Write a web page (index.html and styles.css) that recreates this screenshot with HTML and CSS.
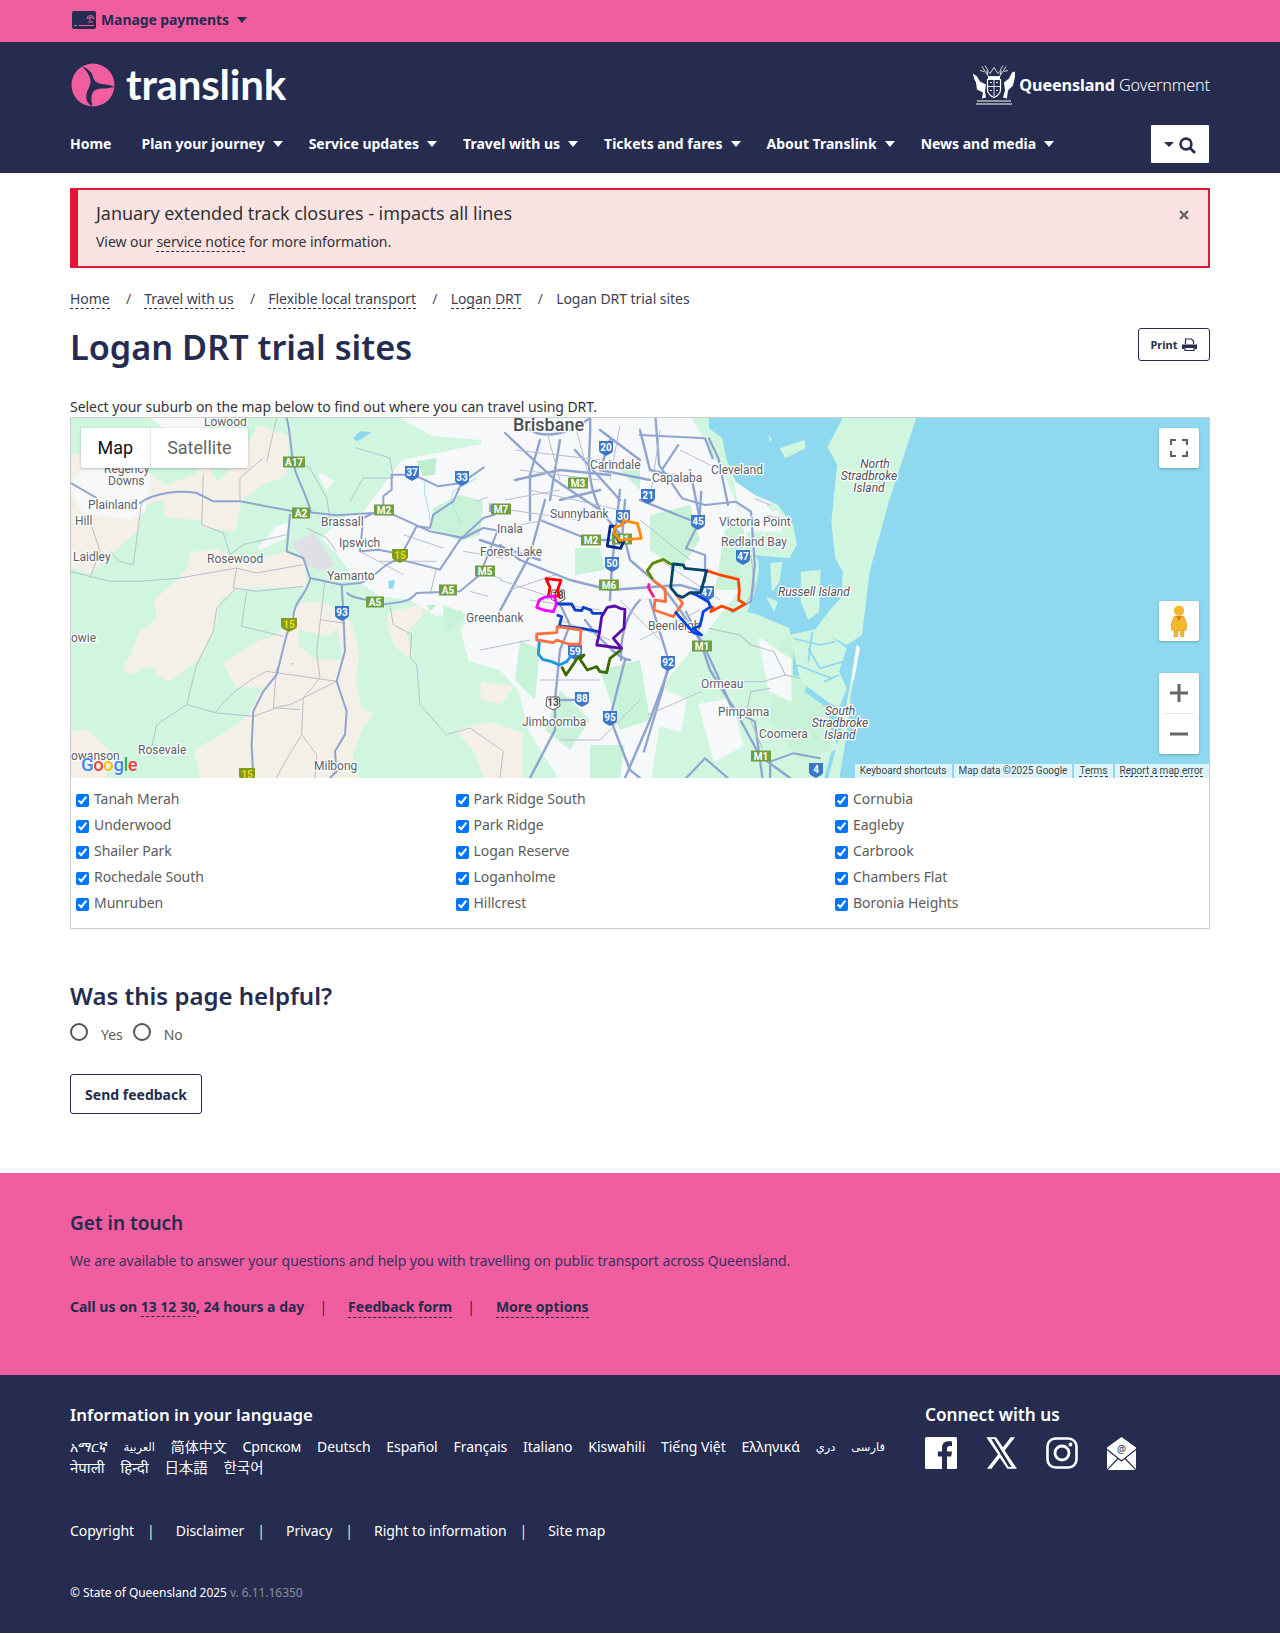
FILE: index.html
```html
<!DOCTYPE html>
<html lang="en">
<head>
<meta charset="utf-8">
<title>Logan DRT trial sites</title>
<link rel="stylesheet" href="styles.css">
</head>
<body>
<div class="topbar">
  <div class="wrap topbar-in">
    <svg class="pay-icon" viewBox="0 0 24 18"><rect width="24" height="18" rx="2" fill="#252c4f"/><path d="M15 8a3.500 3.500 0 0 1 7 0M16.500 8a2 2 0 0 1 4 0M18 10V6M16 11h5" fill="none" stroke="#f15e9f" stroke-width="1"/><path d="M2 14.500h3M7 14.500h15" stroke="#f15e9f" stroke-width="1"/></svg>
    <span class="pay-text">Manage payments</span><span class="caret caret-navy"></span>
  </div>
</div>
<header class="head">
  <div class="wrap">
    <div class="brand-row">
      <div class="logo">
        <svg class="logo-mark" viewBox="0 0 44 44"><circle cx="22" cy="22" r="21.500" fill="#f15e9f"/><path d="M11 3.500C17 5.500 21 9 22 14 22.800 18 26 20.500 31 21 36 21.500 40 22 43.500 24 40 24.800 36 25.500 32 25.600 27 25.800 23 27 21.500 30 20 33.500 20 38 21.500 43.500 16 40.500 14.500 36 15.500 31 16.500 26.500 19 23.500 19.500 19.500 20 14 16 8 11 3.500Z" fill="#252c4f"/></svg>
        <span class="logo-text">translink</span>
      </div>
      <div class="qld">
        <svg class="crest" viewBox="0 0 44 41" fill="none" stroke="#fff"><path d="M15 6l3 3 4-6 4 6 3-3-1 6H16zM10 2l5 8M13 1l3 5M34 2l-5 8M31 1l-3 5M8 6l4 1M36 6l-4 1" stroke-width=".8"/><path d="M16 12h12v2.500H16z" fill="#fff" stroke="none"/><path d="M15.500 15h13v10c0 4-3 6.500-6.500 8-3.500-1.500-6.500-4-6.500-8z" stroke-width="1.200"/><path d="M22 15v17M16 22h12M18 18h2M24 18h2M18 26h2M24 26h2" stroke-width=".9"/><path d="M1 9l4 3 3 5 6 3-1 7 1 6-4 1 1-6-6-3-1-7-2-4z" fill="#fff" stroke="none"/><path d="M43 7l-3 1-3 6-5 4 1 8-2 7 4 1 1-8 5-5 2-9z" fill="#fff" stroke="none"/><path d="M5 36.500h34M4 39.500h36" stroke-width="1"/></svg>
        <span class="qld-text"><b>Queensland</b> Government</span>
      </div>
    </div>
    <nav class="nav">
      <a class="nav-home">Home</a>
      <a class="nav-item">Plan your journey<span class="caret"></span></a>
      <a class="nav-item">Service updates<span class="caret"></span></a>
      <a class="nav-item">Travel with us<span class="caret"></span></a>
      <a class="nav-item">Tickets and fares<span class="caret"></span></a>
      <a class="nav-item">About Translink<span class="caret"></span></a>
      <a class="nav-item">News and media<span class="caret"></span></a>
      <button class="search" aria-label="Search"><span class="caret caret-navy"></span><svg class="search-icon" viewBox="0 0 17 17" fill="none" stroke="#252c4f" stroke-width="2.600"><circle cx="7" cy="7" r="5.400"/><path d="M11 11l5 5"/></svg></button>
    </nav>
  </div>
</header>

<main class="wrap">
  <section class="alert">
    <div>
      <p class="alert-title">January extended track closures - impacts all lines</p>
      <p class="alert-sub">View our <a class="dash">service notice</a> for more information.</p>
    </div>
    <svg class="alert-x" viewBox="0 0 10 10" stroke="#5d5f68" stroke-width="2.200"><path d="M1 1l8 8M9 1l-8 8"/></svg>
  </section>
  <ol class="crumbs">
    <li><a class="dash">Home</a></li><li class="sl">/</li>
    <li><a class="dash">Travel with us</a></li><li class="sl">/</li>
    <li><a class="dash">Flexible local transport</a></li><li class="sl">/</li>
    <li><a class="dash">Logan DRT</a></li><li class="sl">/</li>
    <li>Logan DRT trial sites</li>
  </ol>
  <div class="title-row">
    <h1>Logan DRT trial sites</h1>
    <button class="print">Print<svg class="print-icon" viewBox="0 0 15 13"><path d="M3.500 6V1h6l2 2v3" fill="none" stroke="#252c4f" stroke-width="1.200"/><path d="M0 6.500h15V11h-2.500V9h-10v2H0z" fill="#252c4f"/><path d="M3 9.500h9V12.500H3z" fill="none" stroke="#252c4f" stroke-width="1.200"/></svg></button>
  </div>
  <p class="intro">Select your suburb on the map below to find out where you can travel using DRT.</p>

  <div class="mapbox">
    <div class="map">
      <svg class="mapsvg" viewBox="71 418 1138 360" preserveAspectRatio="none">
        <rect x="71" y="418" width="1138" height="360" fill="#d0f6e0"/>
        <g transform="matrix(.3333 0 0 .3333 70 418)">
          <g class="soft-beige">
            <path d="M0 120L60 110 100 170 230 170 290 210 390 170 400 140 440 200 400 230 400 300 290 290 290 230 210 260 200 330 100 420 60 460 0 440Z"/>
            <path d="M570 30L650 60 640 170 580 190 510 240 490 330 400 320 410 230 460 190 510 130Z"/>
            <path d="M365 410L440 400 520 440 650 410 700 430 700 500 560 500 500 510 440 540 430 620 380 720 300 780 250 760 225 790 170 750 220 640 270 610 260 550 340 480 365 440Z"/>
            <path d="M700 560L760 560 840 620 860 700 850 790 870 880 900 890 870 930 840 1010 860 1080 400 1080 380 1000 470 950 540 900 590 800 500 800 470 740 560 680 620 660 640 640 670 600Z"/>
            <path d="M0 950L50 940 110 1000 100 1080 0 1080Z"/>
            <path d="M960 590L1050 570 1050 590 1000 640 1020 710 980 680 960 620Z"/>
            <path d="M1170 940L1260 920 1350 950 1350 1080 1250 1080 1220 1000Z"/>
            <path d="M1240 800L1320 810 1290 850 1240 840Z"/>
            <path d="M240 630L300 640 270 720 200 740Z"/>
            <path d="M0 290L100 290 60 400 0 420Z"/>
          </g>
          <path class="soft-green" d="M690 640L770 660 800 640 810 720 740 720 690 680Z M210 760L250 750 260 830 200 860 120 830Z"/>
          <g class="soft-white">
            <path d="M880 290L1000 130 1350 60 1350 690 1200 650 1180 570 1100 590 1020 540 930 530 860 480 800 400 760 360 830 300Z"/>
            <path d="M1000 0H1350V70L1090 50Z"/>
            <path d="M50 150L240 170 220 280 180 300 40 280 0 200Z"/>
            <path d="M250 0H420L400 25 280 25Z"/>
            <path d="M620 330L650 320 640 360 570 390Z"/>
            <path d="M750 170L785 190 770 210Z"/>
          </g>
          <path d="M1090 270L1170 230 1240 250 1230 350 1170 370 1080 330Z M1120 560L1190 590 1130 650 1120 600Z" fill="#c9f3d9"/>
          <path d="M1040 130L1100 120 1095 170 1060 175Z M1070 560L1100 560 1080 580Z" fill="#bdeecd"/>
          <path d="M665 375L730 345 770 400 795 440 760 460 705 440 690 410Z" fill="#dfe0e5"/>
          <path d="M850 60L870 40 905 42 880 60 860 70Z M955 490L975 485 970 512 956 512Z M665 735h6v5h-6Z" fill="#8fd9f0"/>
          <path d="M1070 180C1050 220 1080 260 1080 310M1220 180L1150 220C1130 270 1180 300 1170 320" class="creek"/>
          <g class="rd-thin">
            <path d="M620 0L590 130M510 250L510 180 580 120"/>
            <path d="M400 170L395 320 460 345 480 410 520 380 650 350M215 250L190 440 150 430 120 400M60 310L90 400 60 480"/>
            <path d="M0 460L120 490 210 490 330 480 500 450 490 510 560 520 700 505M500 450L560 465 700 440"/>
            <path d="M530 520L515 625 640 655M500 510L440 570 430 640 380 740 350 860 260 920 240 1010"/>
            <path d="M765 490L740 700 750 780 700 840 695 950 740 1010 735 1080M750 605L820 615M590 760L800 790 660 860 610 870 620 750M350 860L440 885 550 895 620 870 690 875M435 885C470 840 510 800 590 760M695 950L640 1040 620 1080"/>
            <path d="M960 560L970 620 1025 650 1020 720 1040 740 1050 860 1130 950 1200 930 1300 1000 1290 1080M680 130L720 150 770 240 780 300M710 330L770 360 800 400"/>
            <path d="M860 90L960 120 970 180 880 180 840 250"/>
            <path d="M1000 350L1120 390M1100 450L1080 530M930 430L1100 430M870 400L1000 470M1180 400L1240 410 1300 420M1260 470L1340 500M1200 520L1340 560M1220 250L1350 200M1260 130L1350 100M1280 620L1350 640"/>
          </g>
          <g class="rd">
            <path d="M3 195L80 240M210 255C250 225 330 215 380 225L430 250 510 250 670 280 740 285 800 292 910 285"/>
            <path d="M650 0C665 50 660 120 680 170 700 220 715 250 722 280"/>
            <path d="M660 290L650 400 700 420 720 480 815 500 870 495C920 480 940 430 990 425L1110 455 1170 365 1240 300 1340 270"/>
            <path d="M720 485C710 530 670 550 670 600L650 650 620 770 580 820 550 880 545 980 550 1080"/>
            <path d="M815 500L820 580 825 700 800 790 830 880 825 950 795 1000 800 1060 780 1080"/>
            <path d="M832 525C850 545 890 540 940 560 980 550 1010 560 1040 525L1170 520 1230 470 1290 320"/>
            <path d="M910 285L970 290 1080 340 1180 360 1240 330 1350 350"/>
            <path d="M870 400L925 395 975 405M870 400L880 300 910 285M1000 400L1040 325 1080 330"/>
            <path d="M940 270L940 235 965 215 965 170 1030 170 1105 205 1175 195 1150 250 1090 290 1080 330"/>
            <path d="M1175 195C1220 160 1280 130 1350 60M1260 280C1260 200 1280 130 1290 60 1300 30 1320 20 1340 30"/>
          </g>
        </g>

        <path class="urban" d="M480 418H690L725 480 745 530 738 590 710 625 665 680 650 778H560L530 730 520 690 500 668 470 660 462 630 520 560 490 500Z"/>
        <path class="urban" d="M700 705L730 700 742 745 715 760Z M660 690L685 700 680 730 660 725Z"/>
        <g fill="#c9f3d9">
          <path d="M650 515L690 505 700 540 680 570 650 550Z M725 530L745 520 740 590 715 590Z M575 548H600L605 570 575 575Z M520 640L540 650 535 700 515 680Z M600 670L640 660 650 720 620 730Z M780 640L830 620 830 750 800 760 770 720Z M620 470L640 465 640 490Z M560 690L590 720 570 750 545 730Z M590 745L625 745 620 778 590 778Z"/>
        </g>
        <path class="urban" d="M735 480L770 470 780 530 745 530Z M760 640L790 660 790 700 770 690Z"/>

        <g transform="matrix(.3827 0 0 .3333 640 415)">
          <path d="M180 0H1500V1095H480L500 1010 520 1000 500 950 490 880 430 830 440 790 400 780 400 700 390 640 310 600 280 590 300 530 310 470 310 440 300 420 390 430 410 390 400 330 380 300 360 270 300 240 250 200 225 130 215 70 180 40Z" fill="#8fd9f0"/>
          <g fill="#d0f6e0">
            <path d="M722 8L530 8 490 95 515 150 500 320 510 430 530 470 525 550 500 580 460 640 540 690 580 660 600 470 650 260Z"/>
            <path d="M365 100L430 75 432 100 380 130Z M335 60L345 75 340 80Z M330 270L345 260 365 285 345 290Z"/>
            <path d="M340 445L372 440 365 500 345 530Z M420 470L472 465 468 590 440 615 420 560Z M330 545L360 560 350 590Z"/>
            <path d="M390 660L470 640 540 700 520 770 540 820 520 880 490 860 420 800Z"/>
            <path d="M565 690L575 700 552 830 540 960 520 1095 490 1095 510 1010 535 900 550 800Z"/>
          </g>
          <path d="M568 690L574 698 560 790 553 800Z" fill="#fff"/>
          <path d="M400 670L470 690 510 680M440 700L470 760 530 740M410 750L500 790M450 650L440 740M480 800L520 780" class="chan"/>
          <path d="M290 420L300 520 280 560M330 300L400 320M300 250L340 270" class="rd-thin"/>
          <g class="rd">
            <path d="M0 60L170 70 190 130M40 0L50 150 110 250 170 270 250 260 290 290 300 450 290 560 240 590M100 90L60 160M180 70L205 130 230 270"/>
            <path d="M155 320L160 230M155 320L120 400 170 420 170 500"/>
            <path d="M120 590L170 700 210 800 240 880 300 920 320 1090"/>
            <path d="M75 745L60 820 10 1010"/>
            <path d="M340 1090L340 1040 400 1015 470 1030M120 1090L170 1030 230 1090"/>
          </g>
          <g class="rd-thin">
            <path d="M180 640L260 660 290 690 350 710 380 780 420 790M210 800L320 800 380 780M340 820L290 830 280 880M20 900L100 860 160 830M320 1000L290 920"/>
          </g>
        </g>

        <g class="rd">
          <path d="M590 418C592 450 582 470 600 510L625 540 630 560 665 590 680 610 700 640 710 670 735 710 760 756 790 778"/>
          <path d="M520 418C530 440 560 440 590 418M505 433L555 480 600 510M600 430L640 460M560 440L550 500M575 450L620 500"/>
          <path d="M625 500L622 540M540 520L590 540 625 540M620 490L612 565 610 600M500 545L520 560 570 580 610 590 680 585 705 592M640 600C630 610 620 630 621 660"/>
          <path d="M558 600L570 625 560 650 555 700 555 730 530 778M580 700L555 700M585 620C600 640 620 660 630 660M625 660L610 718 630 770 640 778"/>
          <path d="M650 600L670 665 650 720 625 778M545 500L530 555 495 620M480 540L540 560"/>
          <path d="M540 440L530 475 530 520M610 440L600 470 650 480M640 430L650 470 690 480M515 480L560 470 610 475M560 500L600 490M640 500L690 520M690 470L700 520"/>
        </g>
        <g class="rd-thin">
          <path d="M515 450L600 460M520 470L600 480M530 490L620 510M510 510L580 520M500 580L560 600M480 650L530 640M530 600L600 610M560 620L610 640M540 680L600 680M560 740L600 740M600 740L640 700M620 600L660 640M640 640L700 610"/>
          <path d="M545 425L560 480M575 425L590 480M620 425L610 480M660 430L650 500M680 450L720 470M505 500L560 490M495 530L545 520M510 590L555 575M640 520L690 560M660 560L720 600"/>
        </g>

        <g class="shg">
          <g transform="translate(294 462)"><rect x="-11" y="-5.500" width="22" height="11"/><text y="3.500">A17</text></g>
          <g transform="translate(301 513)"><rect x="-9" y="-5.500" width="18" height="11"/><text y="3.500">A2</text></g>
          <g transform="translate(384 510)"><rect x="-10" y="-5.500" width="20" height="11"/><text y="3.500">M2</text></g>
          <g transform="translate(501 509)"><rect x="-10" y="-5.500" width="20" height="11"/><text y="3.500">M7</text></g>
          <g transform="translate(485 571)"><rect x="-10" y="-5.500" width="20" height="11"/><text y="3.500">M5</text></g>
          <g transform="translate(448 590)"><rect x="-9" y="-5.500" width="18" height="11"/><text y="3.500">A5</text></g>
          <g transform="translate(375 602)"><rect x="-9" y="-5.500" width="18" height="11"/><text y="3.500">A5</text></g>
          <g transform="translate(578 483)"><rect x="-10" y="-5.500" width="20" height="11"/><text y="3.500">M3</text></g>
          <g transform="translate(591 540)"><rect x="-10" y="-5.500" width="20" height="11"/><text y="3.500">M2</text></g>
          <g transform="translate(622 539)"><rect x="-10" y="-5.500" width="20" height="11"/><text y="3.500">M1</text></g>
          <g transform="translate(609 585)"><rect x="-10" y="-5.500" width="20" height="11"/><text y="3.500">M6</text></g>
          <g transform="translate(702 646)"><rect x="-10" y="-5.500" width="20" height="11"/><text y="3.500">M1</text></g>
          <g transform="translate(761 756)"><rect x="-10" y="-5.500" width="20" height="11"/><text y="3.500">M1</text></g>
        </g>
        <g class="shb">
          <g transform="translate(412 473)"><path d="M-7-7H7V2C7 5 3 6 0 8-3 6-7 5-7 2Z"/><text y="3">37</text></g>
          <g transform="translate(462 478)"><path d="M-7-7H7V2C7 5 3 6 0 8-3 6-7 5-7 2Z"/><text y="3">33</text></g>
          <g transform="translate(342 613)"><path d="M-7-7H7V2C7 5 3 6 0 8-3 6-7 5-7 2Z"/><text y="3">93</text></g>
          <g transform="translate(606 448)"><path d="M-7-7H7V2C7 5 3 6 0 8-3 6-7 5-7 2Z"/><text y="3">20</text></g>
          <g transform="translate(648 496)"><path d="M-7-7H7V2C7 5 3 6 0 8-3 6-7 5-7 2Z"/><text y="3">21</text></g>
          <g transform="translate(623 517)"><path d="M-7-7H7V2C7 5 3 6 0 8-3 6-7 5-7 2Z"/><text y="3">30</text></g>
          <g transform="translate(612 564)"><path d="M-7-7H7V2C7 5 3 6 0 8-3 6-7 5-7 2Z"/><text y="3">50</text></g>
          <g transform="translate(582 699)"><path d="M-7-7H7V2C7 5 3 6 0 8-3 6-7 5-7 2Z"/><text y="3">88</text></g>
          <g transform="translate(610 718)"><path d="M-7-7H7V2C7 5 3 6 0 8-3 6-7 5-7 2Z"/><text y="3">95</text></g>
          <g transform="translate(575 652)"><path d="M-7-7H7V2C7 5 3 6 0 8-3 6-7 5-7 2Z"/><text y="3">59</text></g>
          <g transform="translate(698 522)"><path d="M-7-7H7V2C7 5 3 6 0 8-3 6-7 5-7 2Z"/><text y="3">45</text></g>
          <g transform="translate(743 557)"><path d="M-7-7H7V2C7 5 3 6 0 8-3 6-7 5-7 2Z"/><text y="3">47</text></g>
          <g transform="translate(707 593)"><path d="M-7-7H7V2C7 5 3 6 0 8-3 6-7 5-7 2Z"/><text y="3">47</text></g>
          <g transform="translate(668 663)"><path d="M-7-7H7V2C7 5 3 6 0 8-3 6-7 5-7 2Z"/><text y="3">92</text></g>
          <g transform="translate(816 770)"><path d="M-7-7H7V2C7 5 3 6 0 8-3 6-7 5-7 2Z"/><text y="3">4</text></g>
        </g>
        <g class="sho">
          <g transform="translate(400 555)"><path d="M-8-6H8V2C8 5 3 6 0 8-3 6-8 5-8 2Z"/><text y="3.500">15</text></g>
          <g transform="translate(289 624)"><path d="M-8-6H8V2C8 5 3 6 0 8-3 6-8 5-8 2Z"/><text y="3.500">15</text></g>
          <g transform="translate(247 774)"><path d="M-8-6H8V2C8 5 3 6 0 8-3 6-8 5-8 2Z"/><text y="3.500">15</text></g>
        </g>
        <g class="shw">
          <g transform="translate(553 703)"><path d="M-6-6H6L7 3 0 7-7 3Z"/><text y="3">13</text></g>
          <g transform="translate(558 596)"><path d="M-6-6H6L7 3 0 7-7 3Z"/><text y="3">13</text></g>
        </g>

        <g class="lbl">
          <text x="204" y="426">Lowood</text>
          <text x="104" y="473">Regency</text>
          <text x="108" y="485">Downs</text>
          <text x="88" y="509">Plainland</text>
          <text x="75" y="525">Hill</text>
          <text x="73" y="561">Laidley</text>
          <text x="207" y="563">Rosewood</text>
          <text x="321" y="526">Brassall</text>
          <text x="339" y="547">Ipswich</text>
          <text x="327" y="580">Yamanto</text>
          <text x="497" y="533">Inala</text>
          <text x="480" y="556">Forest Lake</text>
          <text x="466" y="622">Greenbank</text>
          <text x="71" y="642">owie</text>
          <text x="138" y="754">Rosevale</text>
          <text x="314" y="770">Milbong</text>
          <text x="71" y="760">owanson</text>
          <text x="590" y="469">Carindale</text>
          <text x="550" y="518">Sunnybank</text>
          <text x="522" y="726">Jimboomba</text>
          <text x="652" y="482">Capalaba</text>
          <text x="711" y="474">Cleveland</text>
          <text x="719" y="526">Victoria Point</text>
          <text x="721" y="546">Redland Bay</text>
          <text x="648" y="630">Beenleigh</text>
          <text x="701" y="688">Ormeau</text>
          <text x="718" y="716">Pimpama</text>
          <text x="759" y="738">Coomera</text>
          <text class="lbl-big" x="513" y="431">Brisbane</text>
          <text class="lbl-i" x="875" y="468" text-anchor="middle">North</text>
          <text class="lbl-i" x="869" y="480" text-anchor="middle">Stradbroke</text>
          <text class="lbl-i" x="869" y="492" text-anchor="middle">Island</text>
          <text class="lbl-i" x="778" y="596">Russell Island</text>
          <text class="lbl-i" x="840" y="715" text-anchor="middle">South</text>
          <text class="lbl-i" x="840" y="727" text-anchor="middle">Stradbroke</text>
          <text class="lbl-i" x="840" y="739" text-anchor="middle">Island</text>
        </g>

        <g transform="matrix(.3333 0 0 .3333 500 500)" class="trial">
          <path stroke="#f00" d="M138 236L183 241 172 272 178 288 145 290 150 262Z"/>
          <path stroke="#f0f" d="M133 292L162 288 170 310 160 335 130 330 110 322 118 300Z"/>
          <path stroke="#1040c8" d="M172 312L215 312 225 330 245 332 250 322 272 330 278 340 310 340M170 345L185 350 178 378 245 385 295 395"/>
          <path stroke="#5a0bb0" d="M322 322L345 318 360 325 375 328 372 385 340 415 365 445 290 435 298 400 305 350Z"/>
          <path stroke="#1b98e0" d="M118 425L115 462 128 478 155 485 178 495 200 485 215 465"/>
          <path stroke="#3d6b00" d="M185 500L198 525 215 500 232 475 252 465 240 478 262 510 290 500 300 515 320 518 330 475 363 450"/>
          <path stroke="#ff7043" d="M110 402L170 398 172 380 243 390 240 433 205 432 170 420 160 428 110 420Z"/>
          <path stroke="#002a8c" d="M331 78L345 80 342 100 358 125 372 122 362 145 322 138Z"/>
          <path stroke="#ff8c00" d="M345 82L368 75 370 62 412 70 418 90 424 115 385 118 360 122 342 100Z"/>
          <path stroke="#5b8c00" d="M458 238L442 212 458 190 490 178 505 188 520 195"/>
          <path stroke="#ff4500" d="M620 212L660 225 715 238 718 270 716 300 735 312 700 332 665 318 632 335 640 318"/>
          <path stroke="#ff7043" d="M458 240L495 268 497 305 465 300 462 330 520 350 548 310 530 285"/>
          <path stroke="#ff1493" d="M448 250L445 262 462 292"/>
          <path stroke="#0044dd" d="M525 335L580 398 605 405 580 385 600 378 610 335 632 320 625 305 590 285 570 278"/>
          <path stroke="#004466" d="M520 192L550 195 555 205 620 212 602 278 570 278 548 292 530 285 512 262Z"/>
        </g>
        <text class="glogo" x="81" y="771"><tspan fill="#4285f4">G</tspan><tspan fill="#ea4335">o</tspan><tspan fill="#fbbc05">o</tspan><tspan fill="#4285f4">g</tspan><tspan fill="#34a853">l</tspan><tspan fill="#ea4335">e</tspan></text>
      </svg>

      <div class="maptype"><span class="mt mt-on">Map</span><span class="mt">Satellite</span></div>
      <button class="mapbtn btn-full" aria-label="Full screen"><svg viewBox="0 0 18 18" class="ic18" fill="none" stroke="#5f5f5f" stroke-width="2.200"><path d="M1 6V1H6M12 1h5v5M17 12v5h-5M6 17H1v-5"/></svg></button>
      <button class="mapbtn btn-peg" aria-label="Street view"><svg viewBox="0 0 18 34" class="peg"><circle cx="9" cy="6" r="5.500" fill="#f5b82e"/><path d="M4 12h10l3.500 9-1 6-2-1-.5 8h-3L10 27H8l-1 7H4l-.5-8-2 1-1-6z" fill="#f5b82e" stroke="#c98a14" stroke-width=".6"/><path d="M6 12l3 5 3-5z" fill="#dd7a20"/></svg></button>
      <div class="zoombox">
        <button class="zb" aria-label="Zoom in"><svg viewBox="0 0 18 18" class="ic18"><path d="M7.500 0h3v7.500H18v3h-7.500V18h-3v-7.500H0v-3h7.500z" fill="#666"/></svg></button>
        <span class="zsep"></span>
        <button class="zb" aria-label="Zoom out"><svg viewBox="0 0 18 18" class="ic18"><path d="M0 7.500h18v3H0z" fill="#666"/></svg></button>
      </div>
      <div class="attrib">
        <span class="at at-k">Keyboard shortcuts</span><span class="at at-m">Map data ©2025 Google</span><span class="at"><a class="dash2">Terms</a></span><span class="at at-r"><a class="dash2">Report a map error</a></span>
      </div>
    </div>
    <div class="sites">
      <label class="site"><input type="checkbox" checked>Tanah Merah</label>
      <label class="site"><input type="checkbox" checked>Park Ridge South</label>
      <label class="site"><input type="checkbox" checked>Cornubia</label>
      <label class="site"><input type="checkbox" checked>Underwood</label>
      <label class="site"><input type="checkbox" checked>Park Ridge</label>
      <label class="site"><input type="checkbox" checked>Eagleby</label>
      <label class="site"><input type="checkbox" checked>Shailer Park</label>
      <label class="site"><input type="checkbox" checked>Logan Reserve</label>
      <label class="site"><input type="checkbox" checked>Carbrook</label>
      <label class="site"><input type="checkbox" checked>Rochedale South</label>
      <label class="site"><input type="checkbox" checked>Loganholme</label>
      <label class="site"><input type="checkbox" checked>Chambers Flat</label>
      <label class="site"><input type="checkbox" checked>Munruben</label>
      <label class="site"><input type="checkbox" checked>Hillcrest</label>
      <label class="site"><input type="checkbox" checked>Boronia Heights</label>
    </div>
  </div>

  <h2 class="help">Was this page helpful?</h2>
  <div class="radios">
    <input type="radio" name="h" id="y"><label for="y" class="rl">Yes</label>
    <input type="radio" name="h" id="n"><label for="n" class="rl">No</label>
  </div>
  <button class="send">Send feedback</button>
</main>

<section class="touch">
  <div class="wrap">
    <h2 class="touch-h">Get in touch</h2>
    <p class="touch-p">We are available to answer your questions and help you with travelling on public transport across Queensland.</p>
    <p class="touch-links"><span>Call us on <a class="dash">13 12 30</a>, 24 hours a day</span><span class="tsep">|</span><a class="dash">Feedback form</a><span class="tsep">|</span><a class="dash">More options</a></p>
  </div>
</section>

<footer class="foot">
  <div class="wrap">
    <div class="foot-top">
      <div class="foot-lang">
        <h3 class="foot-h">Information in your language</h3>
        <div class="langs">
          <a lang="am">አማርኛ</a><a lang="ar" class="sm">العربية</a><a lang="zh">简体中文</a><a>Српском</a><a>Deutsch</a><a>Español</a><a>Français</a><a>Italiano</a><a>Kiswahili</a><a>Tiếng Việt</a><a>Ελληνικά</a><a lang="prs" class="sm">دري</a><a lang="fa" class="sm">فارسی</a><a lang="ne" class="lg">नेपाली</a><a lang="hi" class="lg">हिन्दी</a><a lang="ja" class="md">日本語</a><a lang="ko" class="md">한국어</a>
        </div>
      </div>
      <div>
        <h3 class="foot-h foot-h2">Connect with us</h3>
        <div class="social">
          <svg class="soc" viewBox="0 0 32 32"><rect width="32" height="32" rx="1.500" fill="#fff"/><path d="M22 32V19.500h4.200l.8-5h-5V11.500c0-1.500.6-2.500 2.600-2.500H27V4.500c-.6-.1-2-.2-3.600-.2-3.800 0-6.400 2.300-6.400 6.500v3.700h-4.200v5H17V32z" fill="#252c4f"/></svg>
          <svg class="soc" viewBox="0 0 24 24"><path d="M18.500.1h3.300l-7.800 10 9.200 13.800h-7.200l-5.600-8.400-6.400 8.400H.7l8.300-10.800L.2.100h7.400l5.100 7.600zM17 22.500h2.200L6.200 1.500H3.900z" fill="#fff"/></svg>
          <svg class="soc" viewBox="0 0 32 32" fill="none" stroke="#fff"><rect x="1.500" y="1.500" width="29" height="29" rx="8" stroke-width="2.600"/><circle cx="16" cy="16" r="7" stroke-width="2.800"/><circle cx="24.500" cy="7.500" r="1.900" fill="#fff" stroke="none"/></svg>
          <svg class="soc mail" viewBox="0 0 29 33"><path d="M14.500 0L29 10.500V20L14.500 26 0 20V10.500z" fill="#fff"/><path d="M0 12.500L14.500 23.500 29 12.500V33H0z" fill="#fff"/><path d="M0 12.500L14.500 24 29 12.500M0 33L11 21.500M29 33L18 21.500" fill="none" stroke="#252c4f" stroke-width="1.200"/><text x="14.500" y="16" text-anchor="middle" class="mail-at">@</text></svg>
        </div>
      </div>
    </div>
    <div class="foot-links">
      <a>Copyright</a><span class="fsep">|</span><a>Disclaimer</a><span class="fsep">|</span><a>Privacy</a><span class="fsep">|</span><a>Right to information</a><span class="fsep">|</span><a>Site map</a>
    </div>
    <p class="copy">© State of Queensland 2025 <span class="ver">v. 6.11.16350</span></p>
  </div>
</footer>
</body>
</html>
```
FILE: styles.css
```css
* { box-sizing: border-box; }
html, body { margin: 0; padding: 0; }
body { font-family: "Noto Sans", "Noto Sans CJK SC", "DejaVu Sans", sans-serif; font-size: 14px; line-height: 20px; letter-spacing: -.05px; color: #252c4f; background: #fff; }
p, h1, h2, h3, ol { margin: 0; padding: 0; }
a { color: inherit; text-decoration: none; }
button { font-family: inherit; cursor: pointer; }
.wrap { width: 1140px; margin: 0 0 0 70px; }

.caret { display: inline-block; width: 0; height: 0; border-left: 5px solid transparent; border-right: 5px solid transparent; border-top: 6px solid #fff; margin-left: 8px; }
.caret-navy { border-top-color: #252c4f; }

.topbar { background: #f15e9f; height: 42px; }
.topbar-in { display: flex; align-items: center; height: 40px; font-weight: 700; letter-spacing: -.1px; }
.pay-icon { width: 24px; height: 18px; margin: 0 5px 0 2px; }

.head { background: #252c4f; height: 131px; color: #fff; }
.brand-row { display: flex; justify-content: space-between; align-items: center; height: 43px; position: relative; top: 21px; }
.logo { display: flex; align-items: center; gap: 11px; }
.logo-mark { width: 44px; height: 44px; margin-left: 1px; }
.logo-text { font-family: Lato, sans-serif; font-weight: 700; font-size: 42px; line-height: 44px; letter-spacing: -.2px; position: relative; top: -1px; }
.qld { display: flex; align-items: center; }
.crest { width: 44px; height: 42px; margin-right: 3px; }
.qld-text { font-size: 16.200px; font-weight: 300; letter-spacing: -.1px; }
.qld-text b { font-weight: 700; }
.nav { display: flex; align-items: center; gap: 26px; height: 38px; margin-top: 40px; font-weight: 700; letter-spacing: 0; }
.nav-home { margin-right: 4px; }
.nav-item { display: flex; align-items: center; }
.search { margin-left: auto; margin-right: 1px; width: 58px; height: 38px; background: #fff; border: 0; border-radius: 1px; display: flex; align-items: center; justify-content: center; padding: 0; }
.search .caret { margin: 0 5px 0 0; border-top-width: 5px; }
.search-icon { width: 17px; height: 17px; margin-top: 3px; }

.alert { margin-top: 15px; height: 80px; background: #f9e3e3; border: 2px solid #e31837; border-left-width: 8px; padding: 10px 12px 0 18px; display: flex; justify-content: space-between; color: #333; }
.alert-title { font-size: 18px; line-height: 26px; }
.alert-sub { margin-top: 6px; }
.alert-x { width: 10px; height: 10px; margin: 10px 7px 0 0; }
.dash { border-bottom: 1px dashed #252c4f; }

.crumbs { list-style: none; display: flex; gap: 14.750px; margin-top: 21px; height: 20px; color: #3a3f55; }
.crumbs li { white-space: nowrap; }
.sl { color: #555; margin: 0 -1.500px 0 1.500px; }

.title-row { display: flex; justify-content: space-between; align-items: flex-start; margin-top: 16px; }
h1 { font-size: 34.250px; line-height: 44px; font-weight: 600; letter-spacing: 0; }
.print { margin-top: 3px; width: 72px; height: 33px; background: #fff; border: 1px solid #252c4f; border-radius: 3px; font-size: 11px; font-weight: 700; color: #252c4f; display: flex; align-items: center; justify-content: center; gap: 5px; padding: 0; }
.print-icon { width: 15px; height: 13px; }

.intro { margin-top: 28px; color: #333; height: 20px; }
.mapbox { border: 1px solid #ccc; height: 512px; }
.map { position: relative; height: 360px; overflow: hidden; letter-spacing: 0; }
.mapsvg { display: block; width: 100%; height: 100%; }
.soft-beige path { fill: #f4f0e7; stroke: #f4f0e7; stroke-width: 16; stroke-linejoin: round; }
.soft-green { fill: #d0f6e0; stroke: #d0f6e0; stroke-width: 10; stroke-linejoin: round; }
.soft-white path { fill: #f7f8fa; stroke: #f7f8fa; stroke-width: 10; stroke-linejoin: round; }
.urban { fill: #f7f8fa; stroke: #f7f8fa; stroke-width: 3; stroke-linejoin: round; }
.rd path, .rd { fill: none; stroke: #8fa4cf; stroke-width: 6; stroke-linejoin: round; stroke-linecap: round; }
svg > .rd { stroke-width: 2.400; }
.rd-thin, .rd-thin path { fill: none; stroke: #b7bfcd; stroke-width: 3; }
svg > .rd-thin { stroke-width: 1; }
svg > .rd-thin path { stroke-width: 1; }
svg > .rd path { stroke-width: 2.400; }
.creek { fill: none; stroke: #9fe2f5; stroke-width: 3; }
.chan { fill: none; stroke: #8fd9f0; stroke-width: 5; }
.trial path { fill: none; stroke-width: 8.500; stroke-linejoin: round; }
.shg rect { fill: #6f9f42; }
.shg text, .shb text, .sho text, .shw text { font-family: Roboto, sans-serif; font-size: 10px; font-weight: 700; text-anchor: middle; }
.shg text { fill: #fff; }
.shb path { fill: #3b78c9; }
.shb text { fill: #fff; }
.sho path { fill: #7f9c22; }
.sho text { fill: #f5d90a; }
.shw path { fill: #fff; stroke: #555; stroke-width: 1; }
.shw text { fill: #444; }
.lbl text { font-family: Roboto, sans-serif; font-size: 12px; fill: #5a5e66; stroke: #fff; stroke-width: 2.500px; paint-order: stroke; stroke-linejoin: round; }
.lbl .lbl-big { font-size: 18px; font-weight: 500; fill: #4a4d55; }
.lbl .lbl-i { font-style: italic; fill: #4d5158; }
.glogo { font-family: Roboto, sans-serif; font-size: 18.500px; font-weight: 500; stroke: #fff; stroke-width: 1px; paint-order: stroke; letter-spacing: -.4px; }

.maptype { position: absolute; left: 10px; top: 10px; height: 40px; display: flex; background: #fff; box-shadow: 0 1px 3px rgba(0,0,0,.25); border-radius: 2px; font-family: Roboto, sans-serif; font-size: 18px; }
.mt { padding: 0 16.500px; line-height: 40px; color: #666; }
.mt-on { color: #111; border-right: 1px solid #e6e6e6; }
.mapbtn { position: absolute; right: 10px; width: 40px; height: 40px; background: #fff; border: 0; border-radius: 2px; box-shadow: 0 1px 3px rgba(0,0,0,.25); padding: 0; display: flex; align-items: center; justify-content: center; }
.btn-full { top: 10px; }
.btn-peg { top: 183px; }
.ic18 { width: 18px; height: 18px; }
.peg { width: 18px; height: 32px; }
.zoombox { position: absolute; right: 10px; top: 255px; width: 40px; height: 81px; background: #fff; border-radius: 2px; box-shadow: 0 1px 3px rgba(0,0,0,.25); display: flex; flex-direction: column; align-items: center; }
.zb { width: 40px; height: 40px; border: 0; background: none; padding: 0; display: flex; align-items: center; justify-content: center; }
.zsep { width: 30px; height: 1px; background: #e6e6e6; }
.attrib { position: absolute; right: 0; bottom: 0; height: 14px; display: flex; font-family: Roboto, sans-serif; font-size: 10px; line-height: 14px; color: #444; }
.at { background: rgba(255,255,255,.7); padding: 0 5px; margin-left: 2px; white-space: nowrap; }
.at-r { padding-right: 6px; }
.dash2 { border-bottom: 1px dashed #444; }

.sites { display: grid; grid-template-columns: repeat(3, 379.500px); grid-auto-rows: 26px; padding: 8px 0 0 5px; }
.site { display: flex; align-items: center; color: #5c5c5c; }
.site input { width: 13px; height: 13px; margin: 2px 5px 0 0; flex: none; }

.help { font-size: 24px; line-height: 32px; font-weight: 600; letter-spacing: 0; margin-top: 51px; }
.radios { display: flex; align-items: center; margin-top: 9px; height: 24px; color: #5c5c5c; }
.radios input { appearance: none; width: 18px; height: 18px; margin: 0; flex: none; border: 2px solid #555; border-radius: 50%; background: #fff; position: relative; top: -1px; }
.rl { margin: 3px 10px 0 13px; }
.send { display: block; margin-top: 29px; width: 132px; height: 40px; background: #fff; border: 1px solid #252c4f; border-radius: 3px; font-size: 14px; font-weight: 700; color: #252c4f; padding: 0; }

.touch { background: #f15e9f; height: 202px; margin-top: 59px; padding-top: 36px; }
.touch-h { font-size: 19px; line-height: 28px; font-weight: 600; letter-spacing: 0; }
.touch-p { margin-top: 14px; color: #3a3060; }
.touch-links { margin-top: 26px; font-weight: 700; display: flex; letter-spacing: 0; }
.tsep { font-weight: 400; margin: 0 21px 0 15px; }

.foot { background: #252c4f; height: 258px; color: #fff; padding-top: 28px; }
.foot-top { display: flex; height: 103px; }
.foot-lang { width: 855px; }
.foot-h { font-size: 16.850px; line-height: 24px; font-weight: 600; letter-spacing: 0; }
.foot-h2 { font-size: 17.200px; }
.langs { display: flex; flex-wrap: wrap; column-gap: 15.800px; margin-top: 10px; width: 860px; line-height: 20px; }
.langs .sm { font-size: 11.500px; }
.langs .lg { font-size: 15px; }
.langs .md { font-size: 14.500px; }
.social { display: flex; gap: 28.500px; margin-top: 10px; }
.soc { width: 32px; height: 32px; }
.mail { width: 29px; height: 33px; }
.mail-at { font-family: "Noto Sans", sans-serif; font-size: 10px; fill: #252c4f; }
.foot-links { display: flex; margin-top: 15px; line-height: 20px; }
.fsep { margin: 0 21px 0 13px; color: #f5e3c8; }
.copy { margin-top: 42px; font-size: 12px; line-height: 20px; }
.ver { color: #8a8d9c; }
```
